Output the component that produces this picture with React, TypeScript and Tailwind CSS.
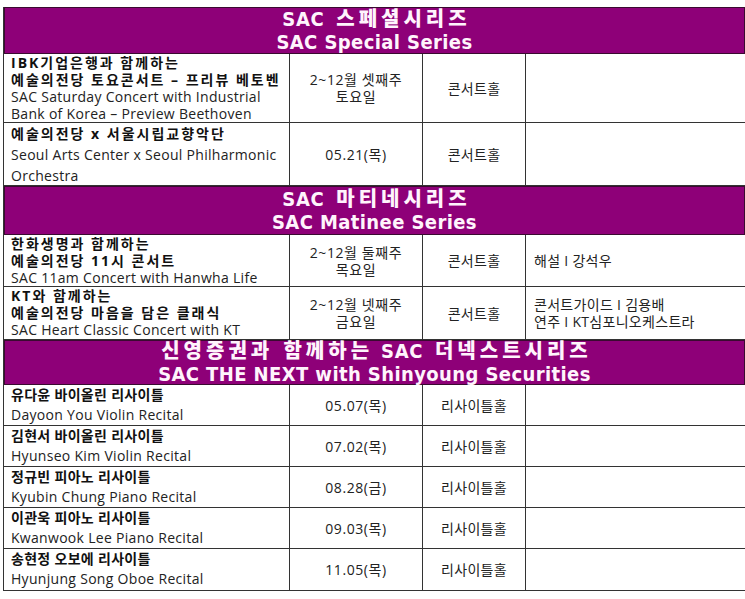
const body = { fontFamily: '"Open Sans", "Noto Sans CJK KR", sans-serif' };
const head = { fontFamily: '"DejaVu Sans Condensed", "Noto Sans CJK KR", sans-serif' };

type Row = {
  h: string;
  lead: string;
  title: string[];
  en: string[];
  when: string[];
  hall: string;
  note?: string[];
};

type Section = { ko: string[]; en: string; h: string; wide: boolean; rows: Row[] };

const sections: Section[] = [
  {
    ko: ["SAC", "스페셜시리즈"],
    en: "SAC Special Series",
    h: "h-[47px]",
    wide: true,
    rows: [
      {
        h: "h-[69px]",
        lead: "leading-[17px]",
        title: ["IBK기업은행과 함께하는", "예술의전당 토요콘서트 – 프리뷰 베토벤"],
        en: ["SAC Saturday Concert with Industrial", "Bank of Korea  – Preview Beethoven"],
        when: ["2~12월 셋째주", "토요일"],
        hall: "콘서트홀",
      },
      {
        h: "h-[63px]",
        lead: "leading-[21px]",
        title: ["예술의전당 x 서울시립교향악단"],
        en: ["Seoul Arts Center x Seoul Philharmonic", "Orchestra"],
        when: ["05.21(목)"],
        hall: "콘서트홀",
      },
    ],
  },
  {
    ko: ["SAC", "마티네시리즈"],
    en: "SAC Matinee Series",
    h: "h-[49px]",
    wide: true,
    rows: [
      {
        h: "h-[52px]",
        lead: "leading-[17px]",
        title: ["한화생명과 함께하는", "예술의전당 11시 콘서트"],
        en: ["SAC 11am Concert with Hanwha Life"],
        when: ["2~12월 둘째주", "목요일"],
        hall: "콘서트홀",
        note: ["해설 I 강석우"],
      },
      {
        h: "h-[53px]",
        lead: "leading-[17px]",
        title: ["KT와 함께하는", "예술의전당 마음을 담은 클래식"],
        en: ["SAC Heart Classic Concert with KT"],
        when: ["2~12월 넷째주", "금요일"],
        hall: "콘서트홀",
        note: ["콘서트가이드 I 김용배", "연주 I KT심포니오케스트라"],
      },
    ],
  },
  {
    ko: ["신영증권과 함께하는", "SAC", "더넥스트시리즈"],
    en: "SAC THE NEXT with Shinyoung Securities",
    h: "h-[45px]",
    wide: false,
    rows: [
      ["유다윤 바이올린 리사이틀", "Dayoon You Violin Recital", "05.07(목)"],
      ["김현서 바이올린 리사이틀", "Hyunseo Kim Violin Recital", "07.02(목)"],
      ["정규빈 피아노 리사이틀", "Kyubin Chung Piano Recital", "08.28(금)"],
      ["이관욱 피아노 리사이틀", "Kwanwook Lee Piano Recital", "09.03(목)"],
      ["송현정 오보에 리사이틀", "Hyunjung Song Oboe Recital", "11.05(목)"],
    ].map(([t, e, d], i) => ({
      h: i === 4 ? "h-[42px]" : "h-[41px]",
      lead: "leading-[20px]",
      title: [t],
      en: [e],
      when: [d],
      hall: "리사이틀홀",
    })),
  },
];

function SectionHead({ s }: { s: Section }) {
  return (
    <div
      className={`${s.h} flex flex-col items-center justify-center bg-[#8e0078] border border-[#3a0a30] text-[#fff4fc] text-[20px] font-bold leading-[23px]`}
      style={head}
    >
      <div className="flex gap-[12px] font-black">
        {s.ko.map((part) =>
          part === "SAC" ? (
            <span key={part} className="tracking-[0.6px]">{part}</span>
          ) : (
            <span key={part} className="tracking-[4px] -mr-[4px]">{part}</span>
          )
        )}
      </div>
      <div className="tracking-[0.4px]">{s.en}</div>
    </div>
  );
}

function TableRow({ r, wide }: { r: Row; wide: boolean }) {
  return (
    <div className={`${r.h} grid grid-cols-[285px_133px_103px_1fr] border-b border-[#333] text-[14px] tracking-[0.3px] text-[#222]`}>
      <div className={`pl-[7px] ${r.lead} overflow-hidden whitespace-nowrap`}>
        {r.title.map((t) => (
          <div key={t} className={`font-bold text-[#111] ${wide ? "tracking-[2px]" : ""}`}>{t}</div>
        ))}
        {r.en.map((t) => (
          <div key={t}>{t}</div>
        ))}
      </div>
      <div className="border-l border-[#333] flex flex-col items-center justify-center leading-[17px] tracking-[0.6px]">
        {r.when.map((t) => (
          <div key={t}>{t}</div>
        ))}
      </div>
      <div className="border-l border-[#333] flex items-center justify-center">{r.hall}</div>
      <div className="border-l border-[#333] flex flex-col justify-center pl-[8px] leading-[17px]">
        {(r.note ?? []).map((t) => (
          <div key={t}>{t}</div>
        ))}
      </div>
    </div>
  );
}

export default function App() {
  return (
    <div className="w-[745px] h-[599px] bg-white pt-[7px] pl-[3px] overflow-hidden" style={body}>
      <div className="border-l border-[#333]">
        {sections.map((s) => (
          <div key={s.en}>
            <SectionHead s={s} />
            {s.rows.map((r, i) => (
              <TableRow key={i} r={r} wide={s.wide} />
            ))}
          </div>
        ))}
      </div>
    </div>
  );
}
